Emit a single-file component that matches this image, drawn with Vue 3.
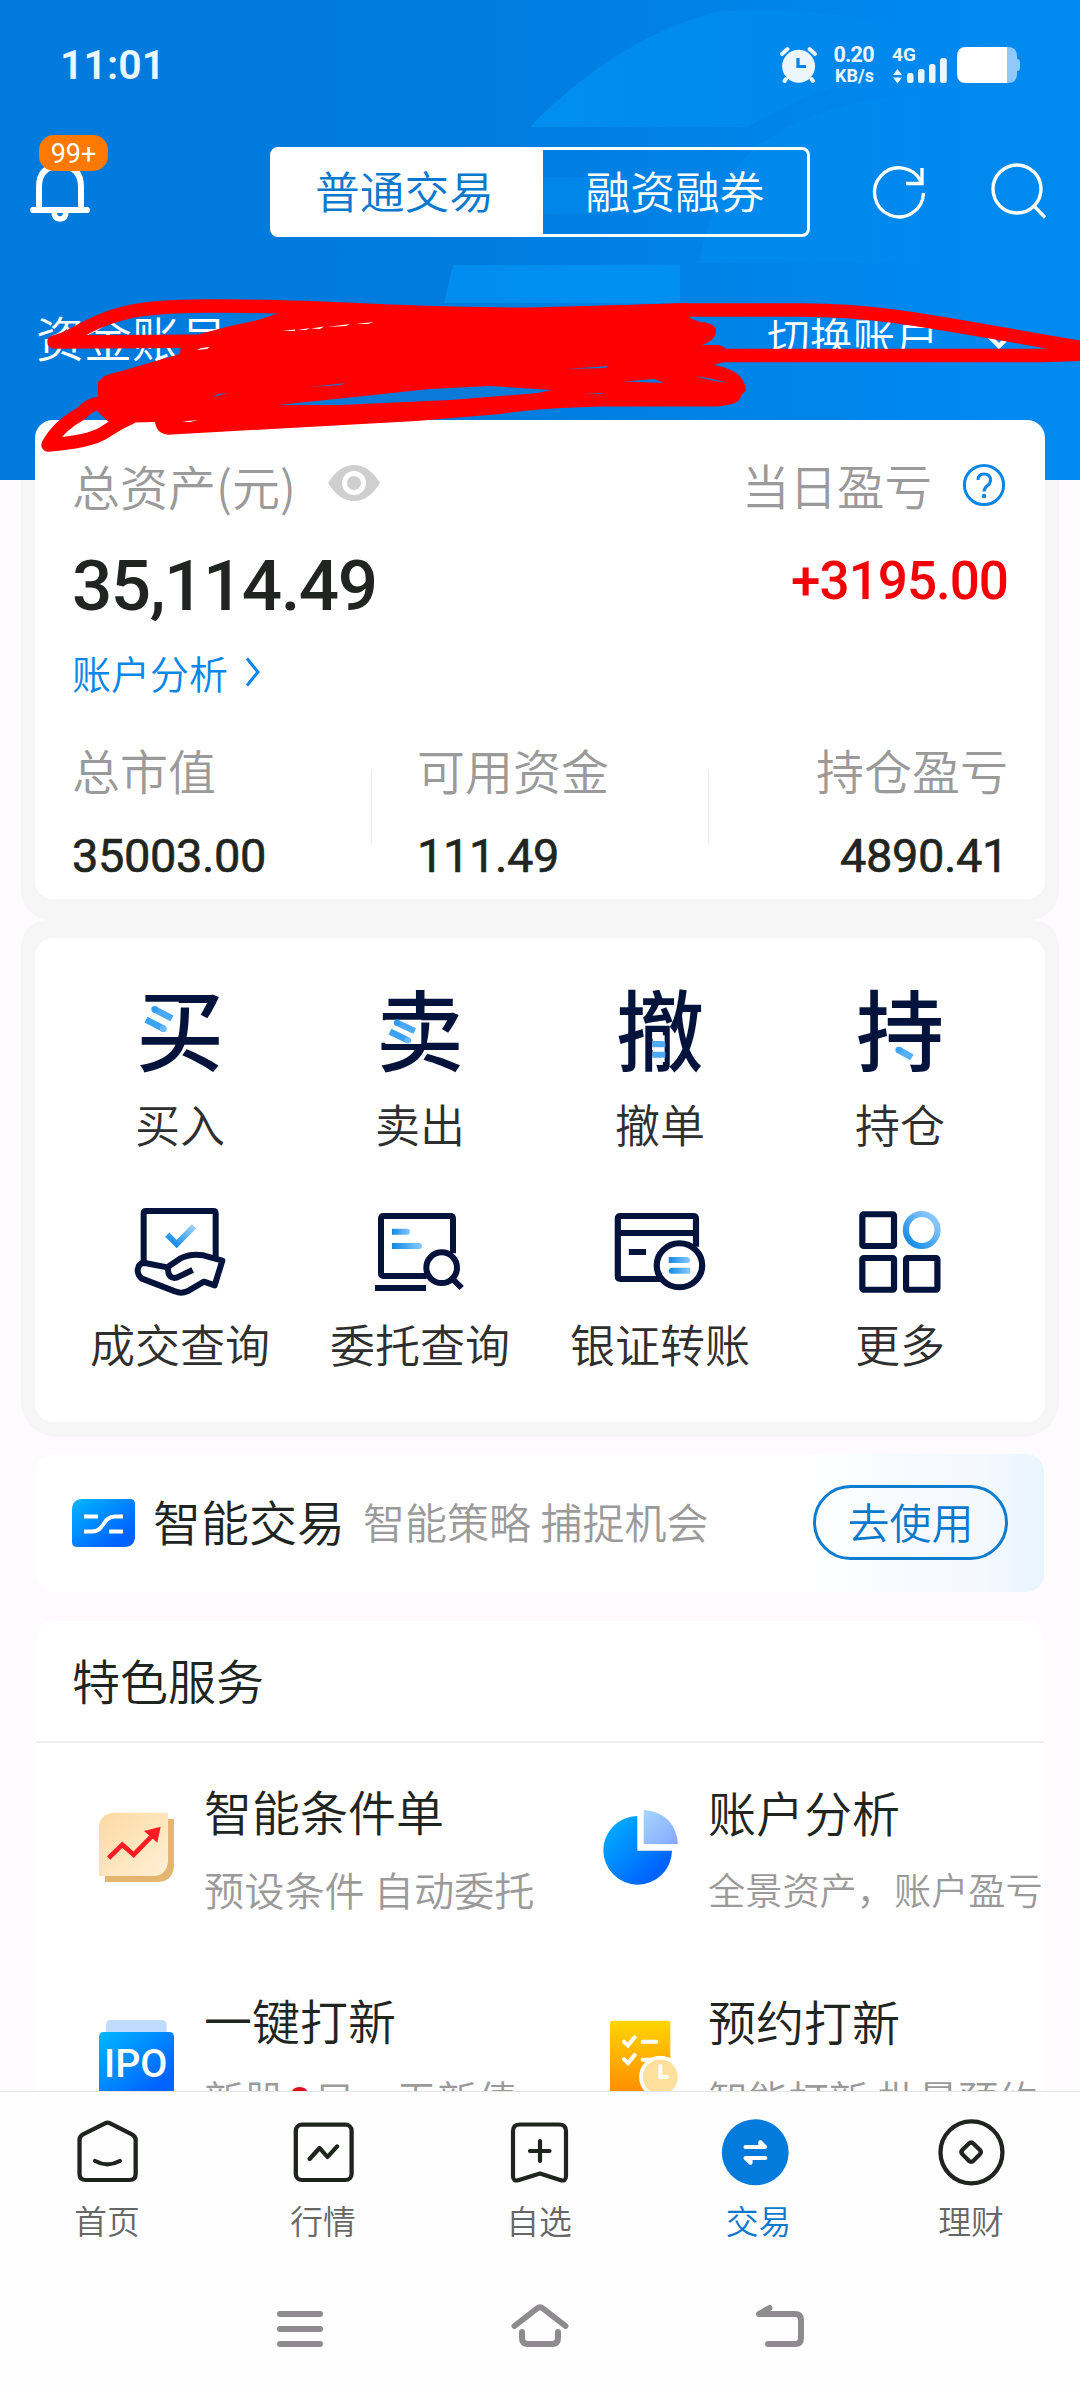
<script setup>
const actions = [
  { key: 'buy', glyph: '买', label: '买入', box: '150 66 300 300' },
  { key: 'sell', glyph: '卖', label: '卖出', box: '870 66 300 300' },
  { key: 'cancel', glyph: '撤', label: '撤单', box: '203.3 66 290.4 300' },
  { key: 'hold', glyph: '持', label: '持仓', box: '900.2 66 290.4 300' },
  { key: 'deal', label: '成交查询', box: '150 720 300 300' },
  { key: 'order', label: '委托查询', box: '870 720 300 300' },
  { key: 'bank', label: '银证转账', box: '203.3 720 290.4 300' },
  { key: 'more', label: '更多', box: '900.2 720 290.4 300' },
]

const stats = [
  { label: '总市值', value: '35003.00' },
  { label: '可用资金', value: '111.49' },
  { label: '持仓盈亏', value: '4890.41' },
]

const tabs = [
  { key: 'home', label: '首页', box: '197.5 96 232.3 240' },
  { key: 'market', label: '行情', box: '824.7 96 232.3 240' },
  { key: 'fav', label: '自选', box: '500 2112 80 80' },
  { key: 'trade', label: '交易', box: '511 96 232.3 240' },
  { key: 'wealth', label: '理财', box: '1138.4 96 232.3 240' },
]
</script>

<template>
  <div class="page">
    <svg width="0" height="0" class="defs">
      <defs>
        <linearGradient id="sky" x1="0" y1="0" x2="1" y2="0">
          <stop offset="0" stop-color="#0e8ae2" />
          <stop offset="1" stop-color="#8cc8ff" />
        </linearGradient>
        <linearGradient id="skyDiag" x1="0" y1="1" x2="1" y2="0">
          <stop offset="0" stop-color="#0a86e4" />
          <stop offset="1" stop-color="#9ed0ff" />
        </linearGradient>
        <linearGradient id="azure" x1="0" y1="0" x2="1" y2="1">
          <stop offset="0" stop-color="#00b8ff" />
          <stop offset="0.8" stop-color="#0062ff" />
        </linearGradient>
        <linearGradient id="lilac" x1="0" y1="0" x2="1" y2="1">
          <stop offset="0" stop-color="#a4d8ff" />
          <stop offset="1" stop-color="#86a6ff" />
        </linearGradient>
        <linearGradient id="cream" x1="0" y1="0" x2="1" y2="1">
          <stop offset="0" stop-color="#fdd9a2" />
          <stop offset="1" stop-color="#fff0d6" />
        </linearGradient>
        <linearGradient id="amber" x1="0" y1="0" x2="0" y2="1">
          <stop offset="0" stop-color="#ffd500" />
          <stop offset="1" stop-color="#ff8a00" />
        </linearGradient>
        <linearGradient id="fade" x1="0" y1="0" x2="1" y2="0">
          <stop offset="0" stop-color="#008ff2" stop-opacity="0.95" />
          <stop offset="0.35" stop-color="#008ff2" stop-opacity="0.75" />
          <stop offset="0.75" stop-color="#008ff2" stop-opacity="0.1" />
          <stop offset="1" stop-color="#008ff2" stop-opacity="0" />
        </linearGradient>
      </defs>
    </svg>

    <header class="header">
      <svg class="header-art" viewBox="0 0 1080 480">
        <path d="M530 127C580 76 640 33 715 12C790 5 850 15 960 35L1000 60Q860 60 748 127Z" fill="url(#fade)" />
        <path d="M543 177H700V214H543Z" fill="url(#fade)" opacity="0.5" />
        <path d="M453 265H680V303H444Z" fill="#0090f2" opacity="0.85" />
        <path d="M699 263Q712 190 752 150Q830 92 950 95L1010 263Z" fill="url(#fade)" opacity="0.55" />
      </svg>

      <div class="status">
        <span class="clock">11:01</span>
        <svg class="status-icons" viewBox="770 40 256 50" width="256" height="50">
          <g fill="#ecf6ff">
            <circle cx="798.6" cy="66.3" r="16.5" />
            <g stroke="#ecf6ff" stroke-width="4" stroke-linecap="round">
              <path d="M782 54L787.5 49M815 54L809.5 49M786 79L784.5 81M811.5 79L813 81" />
            </g>
            <path d="M798 58V66.5H806" fill="none" stroke="#0684e6" stroke-width="3.2" />
            <text x="833.5" y="62" font-size="21.5" textLength="41">0.20</text>
            <text x="835" y="82" font-size="18" textLength="39">KB/s</text>
            <text x="892" y="61.3" font-size="19" textLength="24">4G</text>
            <path d="M893 75L897.5 69L902 75ZM893 77.5L897.5 83.5L902 77.5Z" />
            <rect x="907" y="73" width="6.5" height="10" rx="2.5" />
            <rect x="918" y="69" width="6.5" height="14" rx="2.5" />
            <rect x="929" y="64" width="6.5" height="19" rx="2.5" />
            <rect x="940" y="58" width="6.8" height="25" rx="2.5" />
          </g>
          <path d="M1000 47H1008Q1017 47 1017 56V59Q1020 59 1020 62V68Q1020 71 1017 71V74Q1017 83 1008 83H1000Z" fill="#90c8fb" />
          <path d="M1007 47V83H966Q957 83 957 74V56Q957 47 966 47Z" fill="#fff" />
        </svg>
      </div>

      <div class="toolbar">
        <div class="bell">
          <svg viewBox="30 160 62 64" width="62" height="64" fill="none" stroke="#fff" stroke-width="6" stroke-linecap="round">
            <path d="M33 210H87" />
            <path d="M39 209V187Q39 166 60 166Q81 166 81 187V209" />
            <path d="M54 211Q54 219 60 219Q66 219 66 211" stroke-width="5.5" />
          </svg>
          <span class="badge">99+</span>
        </div>
        <div class="segment">
          <span class="seg on">普通交易</span>
          <span class="seg">融资融券</span>
        </div>
        <svg class="tool-icons" viewBox="870 160 180 64" width="180" height="64" fill="none" stroke="#fff" stroke-width="3.4">
          <path d="M923.5 193A24.5 24.5 0 1 1 921 181.5" />
          <path d="M922 168V183.5H906" />
          <circle cx="1017" cy="189" r="24" />
          <path d="M1034 206L1045 217.5" />
        </svg>
      </div>

      <div class="account">
        <span class="acct-no">资金账号</span>
        <span class="switch">切换账户</span>
        <svg class="down" viewBox="980 330 36 24" width="36" height="24" fill="none" stroke="#fff" stroke-width="4.5">
          <path d="M985 333L999 347L1013 333" />
        </svg>
      </div>
    </header>

    <main class="content">
      <div class="ring ring-top">
        <section class="card assets">
          <div class="row head">
            <span class="muted">总资产(元)</span>
            <svg class="eye" viewBox="0 0 52 38" width="52" height="38">
              <path d="M0 19Q11 1 26 1Q41 1 52 19Q41 37 26 37Q11 37 0 19Z" fill="#cfcfcf" />
              <circle cx="26" cy="19" r="9.5" fill="#cfcfcf" stroke="#fff" stroke-width="5" />
            </svg>
            <span class="muted today">当日盈亏</span>
            <svg class="help" viewBox="0 0 44 44" width="44" height="44" fill="none" stroke="#0a86e6" stroke-width="3">
              <circle cx="22" cy="22" r="19.6" />
              <path d="M16 17Q16 11 22 11Q28.500 11 28.500 17Q28.500 20.500 25 23Q22 25.500 22 28.500" />
              <circle cx="22" cy="33" r="2.2" fill="#0a86e6" stroke="none" />
            </svg>
          </div>
          <div class="row totals">
            <span class="num total">35,114.49</span>
            <span class="num gain">+3195.00</span>
          </div>
          <div class="row link">
            <span>账户分析</span>
            <svg viewBox="0 0 18 32" width="18" height="32" fill="none" stroke="#0a86e6" stroke-width="3">
              <path d="M3 2.500L14 16L3 29.500" />
            </svg>
          </div>
          <div class="stats">
            <div v-for="s in stats" :key="s.label" class="stat">
              <span class="muted">{{ s.label }}</span>
              <span class="num value">{{ s.value }}</span>
            </div>
          </div>
        </section>
      </div>

      <div class="ring ring-grid">
        <section class="card grid">
          <div v-for="a in actions" :key="a.key" class="tile">
            <div class="tile-icon">
              <span v-if="a.glyph" class="glyph">{{ a.glyph }}</span>
              <svg :viewBox="a.box" width="100" height="100" preserveAspectRatio="none" fill="none" stroke="#04133c" stroke-width="18">
                <g v-if="a.key === 'buy'">
                  <path d="M180 125H296V224H180Z" fill="#fff" stroke="none" />
                  <path d="M224 148L276 175" stroke="#4aa8f6" stroke-width="20" />
                  <circle cx="224" cy="148" r="10" fill="#2f9cf0" stroke="none" />
                  <path d="M198 179L250 206" stroke="#3aa2f4" stroke-width="20" />
                  <circle cx="250" cy="206" r="10" fill="#68b8fa" stroke="none" />
                </g>
                <g v-else-if="a.key === 'sell'">
                  <path d="M916 179H1024V252H916Z" fill="#fff" stroke="none" />
                  <path d="M950 188L1004 213" stroke="#4aa8f6" stroke-width="19" />
                  <circle cx="951" cy="188" r="9.500" fill="#2f9cf0" stroke="none" />
                  <path d="M930 215L984 241" stroke="#3aa2f4" stroke-width="19" />
                  <circle cx="984" cy="241" r="9.500" fill="#68b8fa" stroke="none" />
                </g>
                <g v-else-if="a.key === 'cancel'">
                  <path d="M327 226H362V306H327Z" fill="#fff" stroke="none" />
                  <path d="M326 243H355Q364 243 364 252V262H326ZM326 275H364V293H326Z" fill="#4fabf6" stroke="none" />
                </g>
                <g v-else-if="a.key === 'hold'">
                  <path d="M1014 248H1106V314H1014Z" fill="#fff" stroke="none" />
                  <path d="M1042 270L1080 292" stroke="#55b0f8" stroke-width="20" />
                  <circle cx="1042" cy="270" r="10" fill="#3fa4f4" stroke="none" />
                </g>
                <g v-else-if="a.key === 'deal'">
                  <path d="M191 906V760Q191 753 198 753H400Q407 753 407 760V890" />
                  <path d="M195 909L262 922L300 896Q330 880 370 886L427 902L404 976L372 965L322 994Q303 1002 285 994L186 956Q173 947 173 930Q175 908 195 909Z" stroke-linejoin="round" />
                  <path d="M264 922Q262 958 290 953L338 930" />
                  <path d="M262 824L290 852L342 799" stroke="url(#skyDiag)" />
                </g>
                <g v-else-if="a.key === 'order'">
                  <path d="M1119 880V776Q1119 768 1111 768H911Q903 768 903 776V940Q903 948 911 948H1040" />
                  <circle cx="1085" cy="923" r="46" />
                  <path d="M1118 957L1145 984M885 984H1038" />
                  <path d="M936 806H982Q990 806 990 815Q990 824 982 824H936Z" fill="url(#sky)" stroke="none" />
                  <path d="M936 849H1018Q1026 849 1026 858Q1026 867 1018 867H936Z" fill="url(#sky)" stroke="none" />
                </g>
                <g v-else-if="a.key === 'bank'">
                  <path d="M352 957H234Q226 957 226 949V776Q226 768 234 768H445Q453 768 453 776V860M226 819H453M258 876H308" />
                  <circle cx="405" cy="916" r="66" fill="#fff" />
                  <path d="M374 891H428Q436 893 436 900Q436 909 428 909H374Z" fill="url(#sky)" stroke="none" />
                  <path d="M436 923H382Q374 925 374 932Q374 941 382 941H436Z" fill="url(#sky)" stroke="none" />
                </g>
                <g v-else>
                  <rect x="936" y="763" width="92" height="95" rx="4" />
                  <rect x="936" y="894" width="92" height="95" rx="4" />
                  <rect x="1063" y="894" width="91" height="95" rx="4" />
                  <ellipse cx="1108.500" cy="810" rx="46" ry="48" stroke="url(#skyDiag)" />
                </g>
              </svg>
            </div>
            <span class="tile-label">{{ a.label }}</span>
          </div>
        </section>
      </div>

      <section class="smart">
        <svg viewBox="0 0 63 48" width="63" height="48">
          <path d="M11 0H58Q63 0 63 5V37Q63 48 52 48H5Q0 48 0 43V11Q0 0 11 0Z" fill="url(#azure)" />
          <path d="M12 17.500H26M12 32.500H20C33 32.500 30 17.500 43 17.500H51M37 32.500H51" fill="none" stroke="#fff" stroke-width="4" />
        </svg>
        <span class="smart-title">智能交易</span>
        <span class="smart-sub">智能策略 捕捉机会</span>
        <span class="go">去使用</span>
      </section>

      <section class="services">
        <h2>特色服务</h2>
        <div class="service-grid">
          <div class="service">
            <svg viewBox="117 120 228 228" width="76" height="76">
              <path d="M135 336V300H310V147H342V290Q338 332 296 336Z" fill="#e4b56f" />
              <path d="M160 128H324V275Q320 314 282 318H117V170Q121 132 160 128Z" fill="url(#cream)" />
              <path d="M146 264L187 224L221 254L280 194" fill="none" stroke="#ff1a24" stroke-width="14" />
              <path d="M302 170L252 183L292 218Z" fill="#ff1a24" />
            </svg>
            <div class="service-text"><b>智能条件单</b><span>预设条件 自动委托</span></div>
          </div>
          <div class="service">
            <svg viewBox="129 120 228 228" width="76" height="76">
              <path d="M232 138A103 103 0 1 0 336 242H232Z" fill="url(#azure)" />
              <path d="M251 120Q345 128 354 222H251Z" fill="url(#lilac)" />
            </svg>
            <div class="service-text tight"><b>账户分析</b><span>全景资产，账户盈亏</span></div>
          </div>
          <div class="service">
            <svg viewBox="117 747 228 228" width="76" height="76">
              <rect x="138" y="750" width="182" height="60" rx="14" fill="#bfdcff" />
              <rect x="117" y="786" width="225" height="200" rx="14" fill="url(#azure)" />
              <text x="132" y="920" font-size="118" textLength="190" class="ipo">IPO</text>
            </svg>
            <div class="service-text wide"><b>一键打新</b><span>新股<em>0</em>只，无新债</span></div>
          </div>
          <div class="service">
            <svg viewBox="129 750 228 228" width="76" height="76">
              <rect x="150" y="755" width="181" height="225" rx="8" fill="url(#amber)" />
              <g fill="none" stroke="#fff" stroke-width="12" stroke-linecap="round">
                <path d="M192 818L204 829L224 805M192 871L204 882L224 858M248 818H289M248 872H280" />
              </g>
              <circle cx="301" cy="924" r="58" fill="#ffdf9c" stroke="#fff" stroke-width="11" />
              <path d="M301 892V924H320" fill="none" stroke="#fff" stroke-width="12" stroke-linecap="round" />
            </svg>
            <div class="service-text"><b>预约打新</b><span>智能打新 批量预约</span></div>
          </div>
        </div>
      </section>
    </main>

    <footer class="footer">
      <nav class="tabs">
        <div v-for="t in tabs" :key="t.key" class="tab" :class="{ active: t.key === 'trade' }">
          <svg :viewBox="t.box" width="80" height="80" preserveAspectRatio="none" fill="none" stroke="#20241f" stroke-width="12.500" stroke-linecap="round" stroke-linejoin="round">
            <g v-if="t.key === 'home'">
              <path d="M231 180Q231 169 241 163L305 130Q312 126 320 130L383 163Q394 169 394 180V282Q394 300 376 300H249Q231 300 231 282Z" />
              <path d="M276 243Q312 263 348 243" />
            </g>
            <g v-else-if="t.key === 'market'">
              <rect x="859" y="134" width="162" height="166" rx="18" />
              <path d="M899 237L928 204L951 231L979 199" />
            </g>
            <g v-else-if="t.key === 'fav'" stroke-width="4.200">
              <path d="M513 2131Q513 2124.500 520 2124.500H559Q566 2124.500 566 2131V2176Q566 2182 560 2180L540 2173.500L519 2180Q513 2182 513 2176Z" />
              <path d="M530 2151H549.500M540 2141V2161" />
            </g>
            <g v-else-if="t.key === 'trade'">
              <ellipse cx="625" cy="217" rx="97" ry="99" fill="#027bdc" stroke="none" />
              <path d="M597 201H653L640 187V195M654 234H597L611 248V240" stroke="#fff" />
            </g>
            <g v-else>
              <ellipse cx="1253" cy="217" rx="90" ry="93" />
              <path d="M1245 191Q1252 184 1259 191L1277 209Q1284 216 1277 223L1259 242Q1252 249 1245 242L1227 223Q1220 216 1227 209Z" />
            </g>
          </svg>
          <span>{{ t.label }}</span>
        </div>
      </nav>
      <div class="sysnav">
        <svg viewBox="260 2289 80 80" width="80" height="80">
          <path d="M280 2314H320M280 2329H320M280 2344H320" />
        </svg>
        <svg viewBox="500 2289 80 80" width="80" height="80">
          <path d="M514.500 2326L537 2308.500Q540 2306 543 2308.500L565.500 2326M522 2332V2338Q522 2344 528 2344H552Q558 2344 558 2338V2332" />
        </svg>
        <svg viewBox="740 2289 80 80" width="80" height="80">
          <path d="M769.500 2308L759 2314H795Q801 2314 801 2320V2338Q801 2344 795 2344H768" />
        </svg>
      </div>
    </footer>

    <svg class="scribble" viewBox="0 0 1080 180">
      <g transform="translate(0 -285)">
        <path d="M258 320L282 312L448 308L540 308L687 303L690 318L700 322Q716 323 716 331Q716 340 702 345H718Q727 346 727 354V361L714 365Q744 370 746 390L741 396Q740 405 716 406.500H600Q540 408 500 414L416 421L172 434.500Q157 436 155 422L110 423L98 412V382Q104 374 118 372L180 354Q180 345 186 343L200 334L230 326Z" />
        <g class="stroke">
          <path d="M240 341L54 342Q62 340 68 337C105 318 120 306 207 306C320 305 420 316 540 314L690 310H802C890 310 950 326 1090 349M1090 354Q1050 355.500 1040 355.500H714" />
          <path d="M108 403Q90 402 82 413Q58 426 48 445Q90 442 105 432Q120 422 130 418" />
        </g>
        <path class="gap" d="M278 405L345 398L430 389L490 386L552 390L538 393L450 400L340 405ZM624 381.500L654 379L664 383ZM566 369L609 366L605 368ZM213 397L218 394L228 393ZM695 376Q715 379 728 383Q710 381 695 376ZM308 387L346 383L340 385ZM582 394L602 393V394Z" />
        <path class="white" d="M282 331L295 329.500V331ZM298 330L310 328L306 330ZM311 328.500L324 326.500L320 329ZM327 327L350 324L346 326ZM356 324L374 322L368 324ZM197 350L201 348L210 347L207 349ZM182 421.500L198 420L190 422Z" />
      </g>
    </svg>
  </div>
</template>

<style>
body {
  margin: 0;
}
</style>

<style scoped>
.page {
  position: relative;
  display: flex;
  flex-direction: column;
  width: 1080px;
  height: 2392px;
  overflow: hidden;
  background: #fefbff;
  color: #212522;
  font-family: "Noto Sans CJK SC", sans-serif;
  font-weight: 350;
  white-space: nowrap;
}
svg {
  display: block;
  flex: none;
}
.defs {
  position: absolute;
}
.header {
  position: relative;
  flex: none;
  height: 480px;
  background: linear-gradient(90deg, #007bdd 0, #007cde 45%, #0088ee 85%, #008aef 100%);
  color: #fff;
}
.header-art {
  position: absolute;
  inset: 0;
  width: 1080px;
  height: 480px;
}
.status,
.toolbar,
.account {
  position: relative;
  display: flex;
  align-items: center;
}
.status {
  height: 50px;
  padding: 40px 54px 0 60px;
  justify-content: space-between;
  font-family: Roboto, sans-serif;
}
.clock {
  font-size: 41px;
  font-weight: 600;
  line-height: 48px;
  letter-spacing: 0.1px;
  color: #ecf6ff;
}
.status-icons text {
  font-family: Roboto, sans-serif;
  font-weight: 700;
}
.toolbar {
  height: 90px;
  padding: 57px 30px 0;
}
.bell {
  position: relative;
  width: 240px;
}
.badge {
  position: absolute;
  left: 9px;
  top: -25px;
  width: 69px;
  height: 36px;
  border-radius: 15px;
  background: #ff7800;
  font: 400 27px/38px Roboto, sans-serif;
  text-align: center;
}
.segment {
  display: flex;
  box-sizing: border-box;
  width: 540px;
  height: 90px;
  border: 3px solid #fff;
  border-radius: 8px;
}
.seg {
  flex: 1;
  text-align: center;
  font-size: 44.800px;
  line-height: 80px;
}
.seg.on {
  flex: none;
  box-sizing: border-box;
  width: 270px;
  padding-right: 7px;
  background: #fff;
  color: #0a78cc;
}
.tool-icons {
  margin-left: 60px;
}
.account {
  height: 60px;
  padding: 69px 0 0 36px;
}
.acct-no {
  width: 731px;
  font-size: 48px;
  line-height: 60px;
}
.switch {
  width: 213px;
  font-size: 42.800px;
  line-height: 60px;
}
.down {
  margin-top: 10px;
}
.content {
  position: relative;
  flex: 1;
  min-height: 0;
  margin-top: -60px;
  overflow: hidden;
}
.ring {
  margin: 0 21px;
  background: #f6f6f6;
}
.ring-top {
  padding: 0 14px 21px;
  background: linear-gradient(transparent 60px, #f6f6f6 60px);
  border-radius: 0 0 30px 30px;
}
.ring-grid {
  padding: 18px 14px 15px;
  border-radius: 26px 26px 36px 36px;
}
.card {
  background: #fff;
  border-radius: 18px;
}
.assets {
  box-sizing: border-box;
  height: 479px;
  padding: 35px 37px 0;
}
.row {
  display: flex;
  align-items: center;
}
.muted {
  color: #9b9a9b;
  font-size: 48px;
}
.head {
  height: 60px;
  line-height: 58px;
}
.eye {
  margin: -4px 0 0 32px;
}
.today {
  margin-left: auto;
  font-size: 47.500px;
}
.help {
  margin: 0 2px 0 30px;
}
.num {
  font-family: Roboto, "Liberation Sans", sans-serif;
  font-weight: 500;
}
.totals {
  height: 70px;
  margin-top: 36px;
  justify-content: space-between;
}
.total {
  font-size: 71px;
  line-height: 70px;
  letter-spacing: -1.500px;
}
.gain {
  font-size: 53px;
  line-height: 60px;
  margin-top: -10px;
  letter-spacing: -1px;
  color: #f40009;
}
.link {
  height: 50px;
  margin-top: 26px;
  gap: 16px;
  font-size: 39px;
  line-height: 50px;
  color: #0a86e6;
}
.stats {
  display: grid;
  grid-template-columns: 299px 337px 1fr;
  margin-top: 48px;
}
.stat {
  display: flex;
  flex-direction: column;
  line-height: 50px;
}
.stat + .stat {
  padding-left: 46px;
  background: linear-gradient(#ececec, #ececec) 0 25px / 1px 75px no-repeat;
}
.stat:last-child {
  align-items: flex-end;
}
.stat .muted {
  margin: -1px 0 1px;
}
.value {
  margin-top: 36px;
  font-size: 47px;
  font-weight: 400;
  letter-spacing: -0.400px;
  -webkit-text-stroke: 0.6px #212522;
}
.grid {
  display: grid;
  box-sizing: border-box;
  grid-template-columns: repeat(4, 240px);
  grid-auto-rows: 166px;
  row-gap: 52px;
  height: 484px;
  padding: 44px 25px 0;
}
.tile {
  display: flex;
  flex-direction: column;
  align-items: center;
}
.tile-icon {
  position: relative;
  flex: none;
  width: 100px;
  height: 100px;
}
.tile-icon svg {
  position: absolute;
  inset: 0;
}
.glyph {
  display: block;
  text-align: center;
  font-size: 88px;
  font-weight: 500;
  line-height: 88px;
  color: #04133c;
}
.tile-label {
  flex: none;
  margin-top: 17px;
  font-size: 45px;
  line-height: 50px;
  color: #2f2f2f;
}
.tile:nth-child(n + 5) .tile-label {
  margin-top: 19px;
}
.smart {
  display: flex;
  align-items: center;
  box-sizing: border-box;
  height: 138px;
  margin: 17px 36px 0;
  padding: 0 36px;
  border-radius: 18px;
  background: linear-gradient(90deg, #fff 76%, #f8fcff 84%, #f4f8ff 94%, #e8f5ff 100%);
}
.smart-title {
  margin: -6px 18px 0;
  font-size: 48px;
}
.smart-sub {
  margin-top: -5px;
  font-size: 42px;
  color: #9b9a9b;
}
.go {
  box-sizing: border-box;
  width: 195px;
  height: 75px;
  margin-top: -2px;
  margin-left: auto;
  border: 3px solid #0f7dcf;
  border-radius: 38px;
  text-align: center;
  font-size: 42px;
  line-height: 65px;
  color: #0a78cc;
}
.services {
  margin: 29px 36px 0;
  border-radius: 18px 18px 0 0;
  background: #fff;
}
h2 {
  margin: 0;
  padding: 1px 36px 4px;
  border-bottom: 2px solid #eee;
  font-size: 48px;
  font-weight: 350;
  line-height: 115px;
}
.service-grid {
  display: grid;
  grid-template-columns: 504px 504px;
  grid-auto-rows: 209px;
}
.service {
  display: flex;
  align-items: flex-start;
  padding: 37px 0 0 63px;
}
.service svg {
  margin-top: 30px;
}
.service-text {
  display: flex;
  flex-direction: column;
  margin-left: 29px;
}
.service-text b {
  font-size: 48px;
  font-weight: 350;
  line-height: 60px;
}
.service:nth-child(even) b {
  margin: 1px 0 -1px;
}
.service-text span {
  margin-top: 24px;
  font-size: 40.200px;
  line-height: 50px;
  color: #9b9a9b;
}
.service-text.tight span {
  font-size: 37.200px;
}
.service-text.wide span {
  letter-spacing: 0.600px;
}
.service-text em {
  display: inline-block;
  width: 29px;
  text-align: center;
  font: 700 39px/50px Roboto, sans-serif;
  color: #e0101c;
}
.ipo {
  font-family: Roboto, sans-serif;
  font-weight: 500;
  fill: #fff;
}
.footer {
  position: relative;
  flex: none;
  box-sizing: border-box;
  height: 301px;
  border-top: 1px solid #e6e6e6;
  background: #fefefe;
}
.tabs {
  display: grid;
  grid-template-columns: repeat(5, 216px);
  padding-top: 20px;
}
.tab {
  display: flex;
  flex-direction: column;
  align-items: center;
  gap: 8px;
  font-size: 32.800px;
  line-height: 40px;
  color: #666;
}
.tab span {
  padding-right: 2px;
}
.tab.active {
  color: #0a78cc;
}
.tab.active span {
  padding: 0 0 0 5px;
}
.sysnav {
  display: flex;
  justify-content: center;
  gap: 160px;
  margin-top: 49px;
}
.sysnav path {
  fill: none;
  stroke: #8e8b8e;
  stroke-width: 6;
  stroke-linecap: round;
  stroke-linejoin: round;
}
.scribble {
  position: absolute;
  left: 0;
  top: 285px;
  width: 1080px;
  height: 180px;
  fill: #f00;
}
.scribble .stroke {
  fill: none;
  stroke: #f00;
  stroke-width: 13.500;
  stroke-linecap: round;
  stroke-linejoin: round;
}
.scribble .gap {
  fill: #0a7bd8;
}
.scribble .white {
  fill: #fff;
}
</style>
